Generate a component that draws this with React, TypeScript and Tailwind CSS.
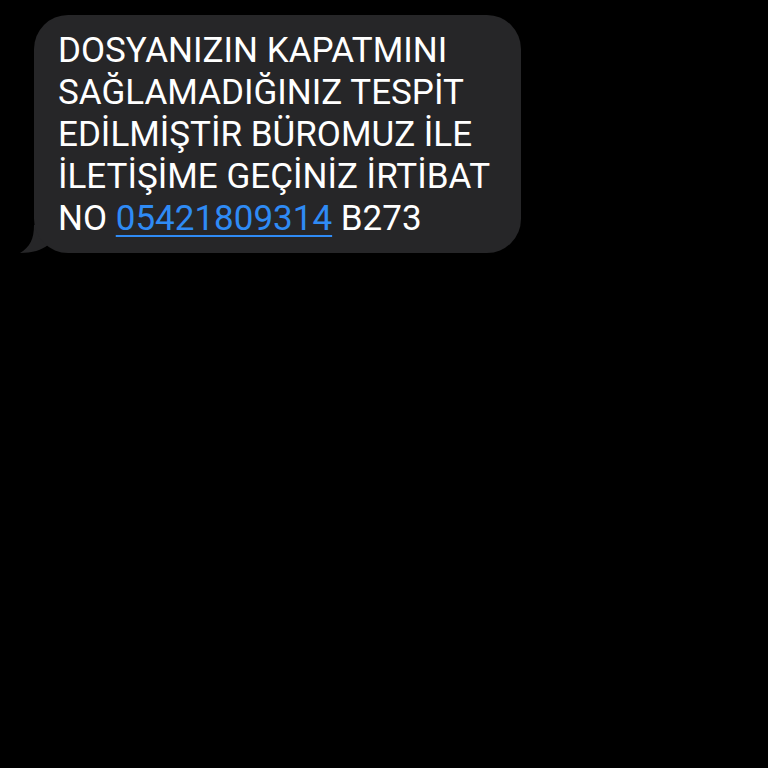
export default function App() {
  const lines = [
    "DOSYANIZIN KAPATMINI",
    "SAĞLAMADIĞINIZ TESPİT",
    "EDİLMİŞTİR BÜROMUZ İLE",
    "İLETİŞİME GEÇİNİZ İRTİBAT",
  ];
  return (
    <div className="w-[768px] h-[768px] bg-black overflow-hidden">
      <div className="pt-[15px] pl-[34px]">
        <div className="relative w-[487px]">
          {/* tail */}
          <svg
            className="absolute left-[-14px] bottom-0"
            width="40"
            height="28"
            viewBox="0 0 40 28"
          >
            <path d="M14 0 C14 14 10 22 0 28 C12 28 22 25 28 20 L40 0 Z" fill="#262628" />
          </svg>
          <div
            className="relative bg-[#262628] rounded-[34px] pl-[24px] pr-4 pt-[15px] pb-[13px] text-white text-[35px] leading-[42px]"
            style={{ fontFamily: 'Roboto, "Liberation Sans", Arial, sans-serif' }}
          >
            {lines.map((l) => (
              <div key={l} className="whitespace-nowrap">
                {l}
              </div>
            ))}
            <div className="whitespace-nowrap">
              NO{" "}
              <span className="text-[#2f8bf5] underline decoration-2 underline-offset-[5px]">
                05421809314
              </span>{" "}
              B273
            </div>
          </div>
        </div>
      </div>
    </div>
  );
}
